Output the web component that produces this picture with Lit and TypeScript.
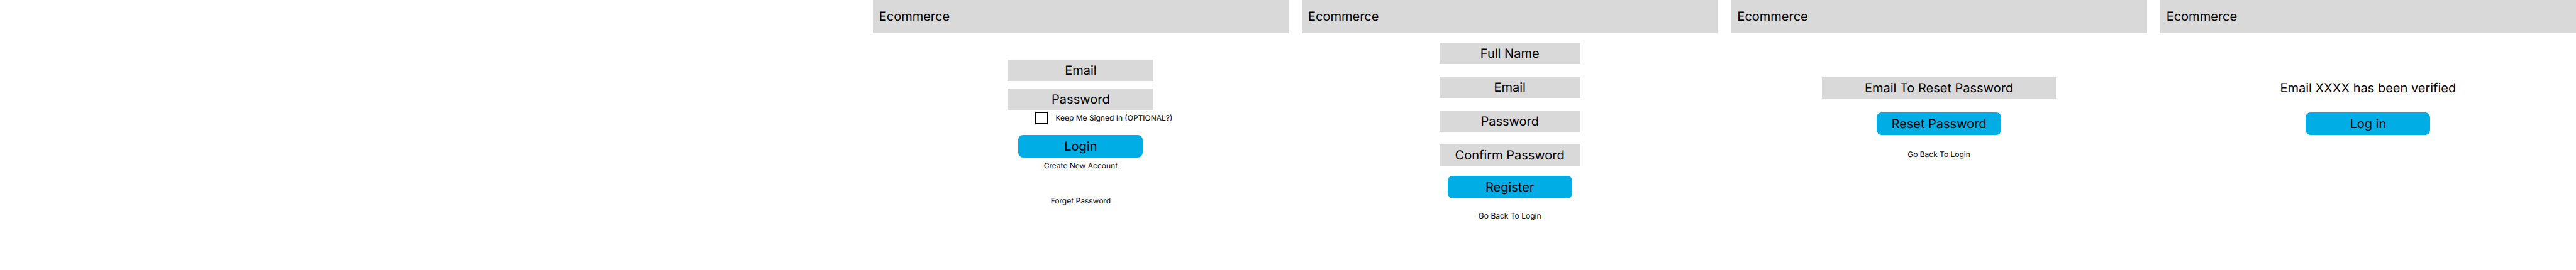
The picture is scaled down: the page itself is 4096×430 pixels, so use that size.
import { LitElement, html, css } from "lit";
import { customElement, property } from "lit/decorators.js";

@customElement("auth-screen")
class AuthScreen extends LitElement {
  @property() brand = "Ecommerce";

  static styles = css`
    :host {
      display: block;
      min-width: 0;
      background: #ffffff;
    }
    .bar {
      display: flex;
      align-items: center;
      height: 53px;
      padding: 0 10px;
      background: #d9d9d9;
    }
  `;

  render() {
    return html`
      <header class="bar">${this.brand}</header>
      <slot></slot>
    `;
  }
}

type Field = { label: string; type: string };

@customElement("app-root")
class AppRoot extends LitElement {
  static styles = css`
    :host {
      display: block;
      min-height: 100vh;
      background: #ffffff;
      color: #000000;
      font-family: Inter, "Liberation Sans", sans-serif;
      font-size: 20px;
      line-height: 25px;
      text-rendering: geometricPrecision;
    }
    .board {
      display: grid;
      grid-template-columns: 31fr repeat(4, 15fr);
      gap: 21px;
    }
    .screen:first-child {
      grid-column: 2;
    }
    .form {
      display: flex;
      flex-direction: column;
      align-items: center;
      margin: 0;
    }
    .fields {
      display: flex;
      flex-direction: column;
      max-width: 100%;
    }
    .login {
      padding-top: 42px;
    }
    .login .fields {
      width: 232px;
      gap: 12px;
    }
    .register {
      padding-top: 15px;
    }
    .register .fields {
      width: 224px;
      gap: 20px;
    }
    .reset,
    .verified {
      padding-top: 70px;
    }
    .reset .fields {
      width: 372px;
    }
    .field {
      box-sizing: border-box;
      width: 100%;
      height: 34px;
      padding: 0;
      border: 0;
      border-radius: 0;
      background: #d9d9d9;
      color: inherit;
      font: inherit;
      text-align: center;
      text-rendering: inherit;
    }
    .field::placeholder {
      color: #000000;
      opacity: 1;
    }
    .keep {
      display: flex;
      align-items: center;
      gap: 12px;
      width: 232px;
      box-sizing: border-box;
      margin-top: 3px;
      padding-left: 44px;
      font-size: 12px;
      line-height: 16px;
      white-space: nowrap;
    }
    .check {
      flex: none;
      appearance: none;
      box-sizing: border-box;
      width: 20px;
      height: 20px;
      margin: 0;
      border: 2px solid #000000;
      background: #ffffff;
    }
    .check:checked {
      background: #00ade5;
    }
    .action {
      width: 198px;
      height: 36px;
      margin-top: 16px;
      padding: 0;
      border: 0;
      border-radius: 8px;
      background: #00ade5;
      color: inherit;
      font: inherit;
      text-rendering: inherit;
    }
    .login .action {
      margin-top: 17px;
    }
    .reset .action,
    .verified .action {
      margin-top: 22px;
    }
    .link {
      color: inherit;
      font-size: 12px;
      line-height: 16px;
      text-decoration: none;
    }
    .login .link {
      margin-top: 5px;
    }
    .login .link + .link {
      margin-top: 40px;
    }
    .register .link {
      margin-top: 20px;
    }
    .reset .link {
      margin-top: 23px;
    }
    .message {
      margin: 0;
      line-height: 34px;
    }
  `;

  private fields(items: Field[]) {
    return html`<div class="fields">
      ${items.map(
        (f) => html`<input
          class="field"
          type=${f.type}
          placeholder=${f.label}
          aria-label=${f.label}
        />`
      )}
    </div>`;
  }

  private action(label: string) {
    return html`<button class="action" type="button">${label}</button>`;
  }

  render() {
    return html`
      <main class="board">
        <auth-screen class="screen">
          <form class="form login">
            ${this.fields([
              { label: "Email", type: "email" },
              { label: "Password", type: "password" },
            ])}
            <label class="keep">
              <input class="check" type="checkbox" />
              <span>Keep Me Signed In (OPTIONAL?)</span>
            </label>
            ${this.action("Login")}
            <a class="link" href="#register">Create New Account</a>
            <a class="link" href="#reset">Forget Password</a>
          </form>
        </auth-screen>

        <auth-screen class="screen">
          <form class="form register">
            ${this.fields([
              { label: "Full Name", type: "text" },
              { label: "Email", type: "email" },
              { label: "Password", type: "password" },
              { label: "Confirm Password", type: "password" },
            ])}
            ${this.action("Register")}
            <a class="link" href="#login">Go Back To Login</a>
          </form>
        </auth-screen>

        <auth-screen class="screen">
          <form class="form reset">
            ${this.fields([{ label: "Email To Reset Password", type: "email" }])}
            ${this.action("Reset Password")}
            <a class="link" href="#login">Go Back To Login</a>
          </form>
        </auth-screen>

        <auth-screen class="screen">
          <div class="form verified">
            <p class="message">Email XXXX has been verified</p>
            ${this.action("Log in")}
          </div>
        </auth-screen>
      </main>
    `;
  }
}
